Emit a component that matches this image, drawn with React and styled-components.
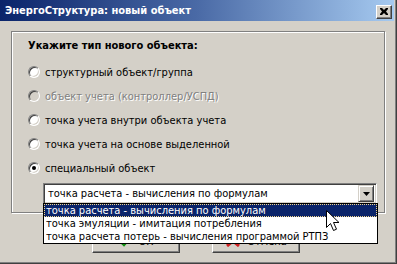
import React from "react";
import styled, { createGlobalStyle } from "styled-components";

const Global = createGlobalStyle`
  html, body { margin: 0; padding: 0; background: #d4d0c8; }
  body {
    font-family: "DejaVu Sans Condensed", "DejaVu Sans", sans-serif;
    font-size: 11px;
    color: #000;
  }
`;

const Window = styled.div`
  position: relative;
  width: 397px;
  height: 264px;
  box-sizing: border-box;
  background: #d4d0c8;
  display: flex;
  flex-direction: column;
  overflow: hidden;
  box-shadow: inset -1px -1px 0 #404040, inset -2px -2px 0 #808080;
`;

const TitleBar = styled.div`
  height: 21px;
  margin-right: 3px;
  display: flex;
  align-items: center;
  justify-content: space-between;
  background: linear-gradient(to right, #0a246a 0%, #4a6aa6 50%, #a6caf0 100%);
  color: #fff;
  font-weight: bold;
  font-size: 11px;
  padding-left: 5px;
`;

const CloseBtn = styled.div`
  width: 16px;
  height: 14px;
  box-sizing: border-box;
  margin-right: 2px;
  margin-top: 2px;
  background: #d4d0c8;
  border: 1px solid;
  border-color: #fff #404040 #404040 #fff;
  box-shadow: inset -1px -1px 0 #808080;
  display: flex;
  align-items: center;
  justify-content: center;
`;

const Body = styled.div`
  flex: 1;
  padding: 10px 0 0 11px;
  display: flex;
  flex-direction: column;
`;

const GroupBox = styled.div`
  width: 374px;
  height: 182px;
  box-sizing: border-box;
  border: 1px solid #808080;
  box-shadow: inset 1px 1px 0 #fff, 1px 1px 0 #fff;
  padding: 7px 0 0 16px;
  display: flex;
  flex-direction: column;
`;

const Heading = styled.div`
  font-weight: bold;
  font-size: 11px;
  line-height: 14px;
  height: 14px;
  margin-bottom: 7px;
`;

const RadioRow = styled.label`
  height: 24px;
  display: flex;
  align-items: center;
  gap: 5px;
  color: ${(p) => (p.$disabled ? "#808080" : "#000")};
  text-shadow: ${(p) => (p.$disabled ? "1px 1px 0 #fff" : "none")};
`;

const RadioCircle = styled.span`
  width: 12px;
  height: 12px;
  box-sizing: border-box;
  border-radius: 50%;
  border: 1px solid;
  border-color: #808080 #fff #fff #808080;
  background: ${(p) => (p.$disabled ? "#d4d0c8" : "#fff")};
  box-shadow: inset 1px 1px 0 #404040, inset -1px -1px 0 #d4d0c8;
  display: flex;
  align-items: center;
  justify-content: center;
  flex-shrink: 0;
  &::after {
    content: "";
    display: ${(p) => (p.$checked ? "block" : "none")};
    width: 4px;
    height: 4px;
    border-radius: 50%;
    background: #000;
  }
`;

const Combo = styled.div`
  position: relative;
  margin: 3px 0 0 15px;
  width: 334px;
  height: 21px;
  box-sizing: border-box;
  background: #fff;
  border: 1px solid;
  border-color: #808080 #fff #fff #808080;
  box-shadow: inset 1px 1px 0 #404040, inset -1px -1px 0 #d4d0c8;
  display: flex;
  align-items: center;
  padding: 0 2px 0 4px;
`;

const ComboText = styled.div`
  flex: 1;
  white-space: nowrap;
`;

const ArrowBtn = styled.div`
  width: 16px;
  height: 17px;
  box-sizing: border-box;
  background: #d4d0c8;
  border: 1px solid;
  border-color: #d4d0c8 #404040 #404040 #d4d0c8;
  box-shadow: inset 1px 1px 0 #fff, inset -1px -1px 0 #808080;
  display: flex;
  align-items: center;
  justify-content: center;
`;

const DropList = styled.div`
  position: absolute;
  top: 100%;
  left: -1px;
  width: 335px;
  box-sizing: border-box;
  background: #fff;
  border: 1px solid #000;
  z-index: 2;
`;

const DropItem = styled.div`
  height: 13px;
  line-height: 13px;
  padding-left: 2px;
  white-space: nowrap;
  background: ${(p) => (p.$active ? "#0a246a" : "#fff")};
  color: ${(p) => (p.$active ? "#fff" : "#000")};
  outline: ${(p) => (p.$active ? "1px dotted #f0d48a" : "none")};
  outline-offset: -1px;
`;

const ButtonRow = styled.div`
  display: flex;
  gap: 32px;
  padding-left: 81px;
  margin-top: 16px;
`;

const Button = styled.div`
  width: 88px;
  height: 24px;
  box-sizing: border-box;
  background: #d4d0c8;
  border: 1px solid;
  border-color: #fff #404040 #404040 #fff;
  box-shadow: inset -1px -1px 0 #808080;
  display: flex;
  align-items: center;
  justify-content: center;
  gap: 6px;
`;

const Cursor = styled.svg`
  position: absolute;
  left: 326px;
  top: 210px;
  z-index: 5;
`;

const options = [
  { label: "структурный объект/группа" },
  { label: "объект учета (контроллер/УСПД)", disabled: true },
  { label: "точка учета внутри объекта учета" },
  { label: "точка учета на основе выделенной" },
  { label: "специальный объект", checked: true },
];

const items = [
  "точка расчета - вычисления по формулам",
  "точка эмуляции - имитация потребления",
  "точка расчета потерь - вычисления программой РТПЗ",
];

export default function App() {
  return (
    <>
      <Global />
      <Window>
        <TitleBar>
          <span>ЭнергоСтруктура: новый объект</span>
          <CloseBtn>
            <svg width="8" height="7" viewBox="0 0 8 7">
              <path d="M0 0h2l2 2 2-2h2v1L6 3.5 8 6v1H6L4 5 2 7H0V6l2-2.5L0 1z" fill="#000" />
            </svg>
          </CloseBtn>
        </TitleBar>
        <Body>
          <GroupBox>
            <Heading>Укажите тип нового объекта:</Heading>
            {options.map((o) => (
              <RadioRow key={o.label} $disabled={o.disabled}>
                <RadioCircle $checked={o.checked} $disabled={o.disabled} />
                {o.label}
              </RadioRow>
            ))}
            <Combo>
              <ComboText>{items[0]}</ComboText>
              <ArrowBtn>
                <svg width="7" height="4" viewBox="0 0 7 4">
                  <path d="M0 0h7L3.5 4z" fill="#000" />
                </svg>
              </ArrowBtn>
              <DropList>
                {items.map((t, i) => (
                  <DropItem key={t} $active={i === 0}>
                    {t}
                  </DropItem>
                ))}
              </DropList>
            </Combo>
          </GroupBox>
          <ButtonRow>
            <Button>
              <svg width="14" height="12" viewBox="0 0 14 12">
                <path d="M1 6l4 4 8-9" stroke="#109010" strokeWidth="2.5" fill="none" />
              </svg>
              ОК
            </Button>
            <Button>
              <svg width="16" height="12" viewBox="0 0 16 12">
                <path d="M2 1l12 10M14 1L2 11" stroke="#d02020" strokeWidth="3" fill="none" />
              </svg>
              Отмена
            </Button>
          </ButtonRow>
        </Body>
        <Cursor width="13" height="22" viewBox="0 0 13 22">
          <path d="M0.5 0.5v17l4-4 3 7 3-1.3-3-6.7h5.5z" fill="#fff" stroke="#000" strokeWidth="1" />
        </Cursor>
      </Window>
    </>
  );
}
